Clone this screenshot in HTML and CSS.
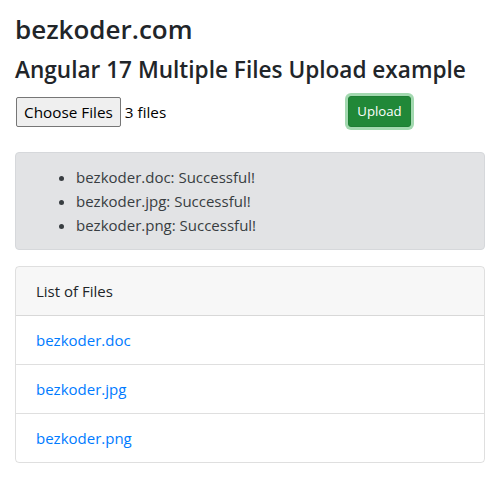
FILE: index.html
```html
<!DOCTYPE html>
<html>
<head>
<meta charset="utf-8">
<link rel="stylesheet" href="styles.css">
</head>
<body>
<div class="container">
  <div class="heading">
    <h3 class="site">bezkoder.com</h3>
    <h4 class="title">Angular 17 Multiple Files Upload example</h4>
  </div>
  <div class="row">
    <div class="col-8">
      <label class="file-input"><span class="file-btn">Choose Files</span><span class="file-name">3 files</span></label>
    </div>
    <div class="col-4">
      <button class="btn-upload">Upload</button>
    </div>
  </div>
  <div class="alert">
    <ul class="msg-list">
      <li>bezkoder.doc: Successful!</li>
      <li>bezkoder.jpg: Successful!</li>
      <li>bezkoder.png: Successful!</li>
    </ul>
  </div>
  <div class="card">
    <div class="card-header">List of Files</div>
    <ul class="list-group">
      <li class="list-item"><a href="#" class="file-link">bezkoder.doc</a></li>
      <li class="list-item"><a href="#" class="file-link">bezkoder.jpg</a></li>
      <li class="list-item"><a href="#" class="file-link">bezkoder.png</a></li>
    </ul>
  </div>
</div>
</body>
</html>
```

FILE: styles.css
```css
* { box-sizing: border-box; }
body {
  margin: 0;
  font-family: "Open Sans", "Noto Sans", sans-serif;
  font-size: 15px;
  line-height: 24px;
  color: #212529;
  background: #fff;
}
.container { padding: 0 15px; }
.heading { padding-top: 12px; }
.site {
  font-size: 26px;
  font-weight: 600;
  line-height: 34px;
  margin: 0 0 9px;
}
.title {
  font-size: 22.6px;
  font-weight: 600;
  line-height: 29px;
  margin: 0;
}
.row {
  display: flex;
  margin: 12px -15px 25px;
}
.col-8 { flex: 0 0 66.6667%; padding: 0 15px; }
.col-4 { flex: 0 0 33.3333%; padding: 0 15px; }
.file-input { display: flex; align-items: center; padding-top: 1px; padding-left: 1px; }
.file-btn {
  display: inline-block;
  height: 30px;
  line-height: 28px;
  padding: 0 7px;
  background: #efefef;
  border: 1px solid #767676;
  border-radius: 2px;
  color: #000;
  font-size: 15.3px;
}
.file-name { margin-left: 4px; color: #000; font-size: 15.3px; }
.btn-upload {
  font-family: inherit;
  font-size: 13.2px;
  line-height: 21px;
  padding: 4px 8px;
  color: #fff;
  background: #218838;
  border: 1px solid #1e7e34;
  border-radius: 3px;
  box-shadow: 0 0 0 3px rgba(72, 180, 97, .5);
}
.alert {
  background: #e2e3e5;
  border: 1px solid #d6d8db;
  border-radius: 4px;
  color: #383d41;
  padding: 12px 20px;
  margin-bottom: 16px;
}
.msg-list { margin: 0; padding-left: 40px; }
.card {
  border: 1px solid rgba(0, 0, 0, .125);
  border-radius: 4px;
  overflow: hidden;
}
.card-header {
  padding: 12px 20px;
  background: rgba(0, 0, 0, .03);
  border-bottom: 1px solid rgba(0, 0, 0, .125);
}
.list-group { list-style: none; margin: 0; padding: 0; }
.list-item {
  padding: 12px 20px;
  border-bottom: 1px solid rgba(0, 0, 0, .125);
}
.list-item:last-child { border-bottom: 0; }
.file-link { color: #007bff; text-decoration: none; }
```
